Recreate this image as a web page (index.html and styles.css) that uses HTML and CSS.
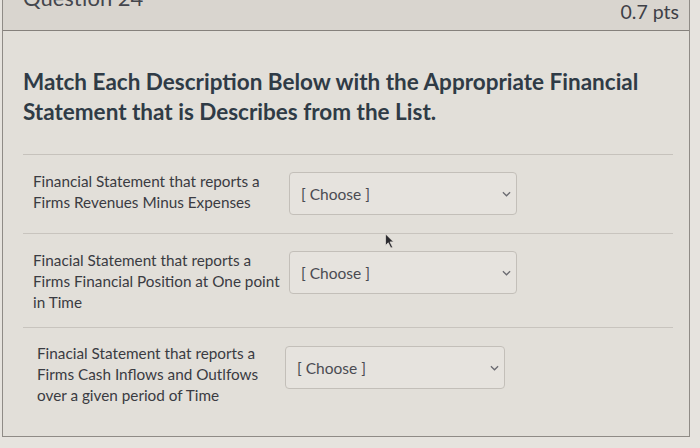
FILE: index.html
```html
<!DOCTYPE html>
<html>
<head>
<meta charset="utf-8">
<link rel="stylesheet" href="styles.css">
</head>
<body>
<div class="question">
  <div class="q-header">
    <span class="q-name">Question 24</span>
    <span class="q-pts">0.7 pts</span>
  </div>
  <div class="q-body">
    <p class="q-text">Match Each Description Below with the Appropriate Financial Statement that is Describes from the List.</p>
    <div class="answers">
      <div class="row first">
        <div class="label">Financial Statement that reports a Firms Revenues Minus Expenses</div>
        <div class="select"><span>[ Choose ]</span><svg class="chev" viewBox="0 0 10 6" width="9" height="6"><path d="M1 1 L5 5 L9 1" fill="none" stroke="#6a6a70" stroke-width="1.4"/></svg></div>
      </div>
      <div class="row">
        <div class="label">Finacial Statement that reports a Firms Financial Position at One point in Time</div>
        <div class="select"><span>[ Choose ]</span><svg class="chev" viewBox="0 0 10 6" width="9" height="6"><path d="M1 1 L5 5 L9 1" fill="none" stroke="#6a6a70" stroke-width="1.4"/></svg></div>
      </div>
      <div class="row last">
        <div class="label">Finacial Statement that reports a Firms Cash Inflows and Outlfows over a given period of Time</div>
        <div class="select"><span>[ Choose ]</span><svg class="chev" viewBox="0 0 10 6" width="9" height="6"><path d="M1 1 L5 5 L9 1" fill="none" stroke="#6a6a70" stroke-width="1.4"/></svg></div>
      </div>
    </div>
  </div>
  <svg class="cursor" viewBox="0 0 12 18" width="12" height="16"><path d="M1 1 L1 14 L4 11 L7 17 L9 16 L6 10 L10 10 Z" fill="#2a2a2e" stroke="#e8e4de" stroke-width="0.8"/></svg>
</div>
</body>
</html>
```
FILE: styles.css
```css
html, body {
  margin: 0;
  padding: 0;
}
body {
  background: #e6e3de;
  font-family: Lato, "Open Sans", sans-serif;
  color: #3c3d44;
  width: 700px;
  height: 448px;
  overflow: hidden;
}
.question {
  position: relative;
  margin-left: 2px;
  width: 688px;
  height: 437px;
  border: 1px solid #8f8b86;
  border-top: none;
  background: #e2dfd9;
  box-sizing: border-box;
}
.q-header {
  height: 31px;
  background: #d9d5cf;
  border-bottom: 1px solid #85817c;
  display: flex;
  justify-content: space-between;
  align-items: flex-start;
  padding: 0 10px 0 20px;
  box-sizing: border-box;
}
.q-name {
  font-size: 22px;
  font-weight: 400;
  color: #44464d;
  margin-top: -14px;
  line-height: 24px;
}
.q-pts {
  font-size: 19.5px;
  color: #3e4047;
  margin-top: 1px;
  line-height: 22px;
}
.q-body {
  padding: 36px 16px 0 20px;
}
.q-text {
  margin: 0;
  font-size: 22.5px;
  line-height: 30px;
  font-weight: 700;
  color: #2f3b46;
  width: 640px;
}
.answers {
  margin-top: 27px;
  border-top: 1px solid #c6c2bc;
}
.row {
  display: flex;
  align-items: flex-start;
  padding: 16px 0 14px 10px;
  border-bottom: 1px solid #c8c4be;
}
.row.first {
  padding-bottom: 18px;
}
.row.last {
  border-bottom: none;
  padding-left: 14px;
  padding-top: 15px;
}
.label {
  width: 252px;
  font-size: 15.3px;
  line-height: 21px;
  color: #3a3b42;
  flex: none;
}
.select {
  margin-left: 4px;
  margin-top: 1px;
  width: 228px;
  height: 43px;
  border: 1px solid #c3bfb9;
  border-radius: 4px;
  background: #e6e3de;
  display: flex;
  align-items: center;
  justify-content: space-between;
  padding: 0 5px 0 11px;
  box-sizing: border-box;
  font-size: 15.5px;
  color: #4a4b52;
}
.row.last .select {
  margin-left: -4px;
  margin-top: 3px;
  width: 220px;
}
.chev {
  flex: none;
}
.cursor {
  position: absolute;
  left: 381px;
  top: 233px;
}
```
